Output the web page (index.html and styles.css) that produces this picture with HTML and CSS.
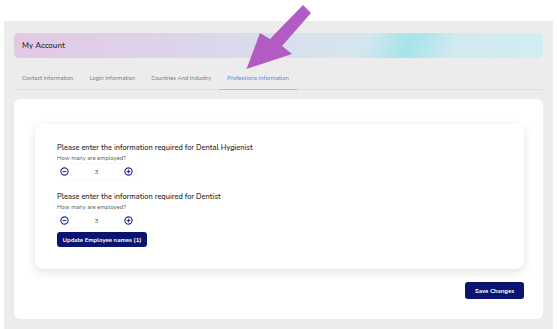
FILE: index.html
```html
<!DOCTYPE html>
<html>
<head>
<meta charset="utf-8">
<link rel="stylesheet" href="styles.css">
</head>
<body>
<div class="page">
  <div class="panel">
    <div class="banner"><span class="banner-title">My Account</span></div>
    <nav class="tabs">
      <span class="tab">Contact Information</span>
      <span class="tab">Login Information</span>
      <span class="tab">Countries And Industry</span>
      <span class="tab active">Professions Information</span>
    </nav>
    <div class="card">
      <div class="inner">
        <div class="group">
          <h2 class="q-title">Please enter the information required for Dental Hygienist</h2>
          <div class="q-label">How many are employed?</div>
          <div class="stepper">
            <svg class="ic" viewBox="0 0 10 10"><circle cx="5" cy="5" r="4" fill="none" stroke="#2a2f85" stroke-width="1.3"/><line x1="3" y1="5" x2="7" y2="5" stroke="#2a2f85" stroke-width="1.3"/></svg>
            <span class="num">3</span>
            <svg class="ic" viewBox="0 0 10 10"><circle cx="5" cy="5" r="4" fill="none" stroke="#2a2f85" stroke-width="1.3"/><line x1="3" y1="5" x2="7" y2="5" stroke="#2a2f85" stroke-width="1.3"/><line x1="5" y1="3" x2="5" y2="7" stroke="#2a2f85" stroke-width="1.3"/></svg>
          </div>
        </div>
        <div class="group">
          <h2 class="q-title">Please enter the information required for Dentist</h2>
          <div class="q-label">How many are employed?</div>
          <div class="stepper">
            <svg class="ic" viewBox="0 0 10 10"><circle cx="5" cy="5" r="4" fill="none" stroke="#2a2f85" stroke-width="1.3"/><line x1="3" y1="5" x2="7" y2="5" stroke="#2a2f85" stroke-width="1.3"/></svg>
            <span class="num">3</span>
            <svg class="ic" viewBox="0 0 10 10"><circle cx="5" cy="5" r="4" fill="none" stroke="#2a2f85" stroke-width="1.3"/><line x1="3" y1="5" x2="7" y2="5" stroke="#2a2f85" stroke-width="1.3"/><line x1="5" y1="3" x2="5" y2="7" stroke="#2a2f85" stroke-width="1.3"/></svg>
          </div>
        </div>
        <button class="btn btn-update">Update Employee names (1)</button>
      </div>
      <div class="actions">
        <button class="btn btn-save">Save Changes</button>
      </div>
    </div>
  </div>
  <svg class="arrow" viewBox="0 0 557 80" width="557" height="80">
    <polygon points="246.5,69 260,33 270,39 303,5 311,13 282,46 292,54" fill="#b25bc2"/>
  </svg>
</div>
</body>
</html>
```
FILE: styles.css
```css
* { box-sizing: border-box; }
html, body { margin: 0; padding: 0; background: #fff; }
body { font-family: "Nunito", Lato, "Open Sans", sans-serif; color: #333; }
.page { position: relative; padding: 21px 4px 0 4px; height: 329px; overflow: hidden; }
.panel { background: #ececec; padding: 12px 10px 11px 10px; height: 308px; }
.banner {
  height: 25px;
  border-radius: 5px;
  display: flex;
  align-items: center;
  padding-left: 8px;
  background:
    linear-gradient(112deg, rgba(255,255,255,0) 66%, rgba(160,228,232,0.9) 74%, rgba(255,255,255,0) 83%),
    linear-gradient(90deg, #e3c8e4 0%, #dcd6ea 35%, #d6e4ee 60%, #d0eef1 100%);
}
.banner-title { font-size: 8px; font-weight: 600; color: #333; }
.tabs {
  display: flex;
  margin-top: 8px;
  height: 24px;
  border-bottom: 1px solid #dedede;
}
.tab {
  font-size: 5.8px;
  color: #777;
  padding: 0 8px;
  display: flex;
  align-items: center;
}
.tab.active { color: #4f7cf0; border-bottom: 1.5px solid #a8bdf2; margin-bottom: -1px; }
.card {
  background: #fff;
  border-radius: 6px;
  margin-top: 9px;
  height: 220px;
  padding: 25px 19px 0 21px;
}
.inner {
  background: #fff;
  border-radius: 8px;
  box-shadow: 0 3px 10px rgba(0,0,0,0.12);
  height: 145px;
  padding: 17px 22px 0 22px;
}
.group + .group { margin-top: 11px; }
.q-title { margin: 0; padding-top: 2px; font-size: 7.4px; font-weight: 600; color: #333; line-height: 11px; }
.q-label { font-size: 5.9px; color: #555; margin-top: 0; line-height: 8px; }
.stepper {
  margin-top: 2px;
  width: 79px;
  height: 15px;
  border-radius: 4px;
  box-shadow: 0 0 2px rgba(0,0,0,0.08);
  display: flex;
  align-items: center;
  justify-content: space-between;
  padding: 0 3px;
}
.ic { width: 9px; height: 9px; display: block; }
.num { font-size: 6.5px; color: #555; }
.btn {
  display: block;
  border: 0;
  background: #0b1470;
  color: #fff;
  font-family: inherit;
  font-weight: 700;
  font-size: 6px;
  border-radius: 3px;
  padding: 0;
}
.btn-update { width: 90px; height: 15px; margin-top: 4px; }
.actions { display: flex; justify-content: flex-end; margin-top: 13px; }
.btn-save { width: 59px; height: 17px; }
.arrow { position: absolute; left: 0; top: 0; pointer-events: none; }
```
